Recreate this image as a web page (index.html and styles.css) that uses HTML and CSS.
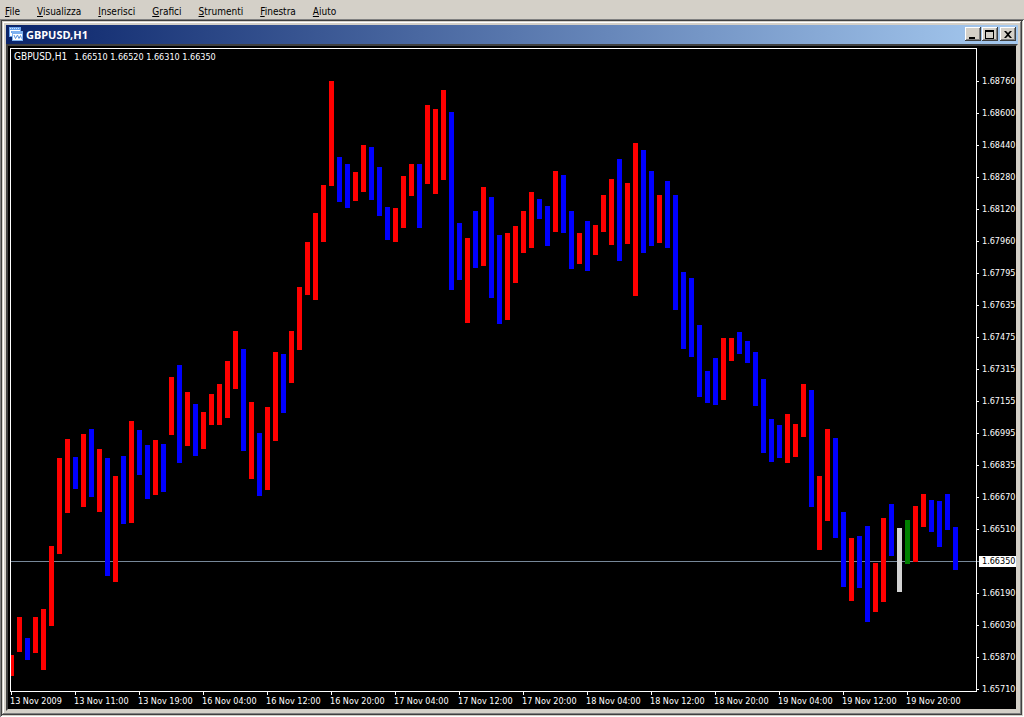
FILE: index.html
```html
<!DOCTYPE html>
<html lang="it">
<head>
  <meta charset="UTF-8">
  <title>GBPUSD,H1</title>
  <link rel="stylesheet" href="styles.css">
</head>
<body>

  <!-- Menu -->
  <nav class="menu">
    <a href="#"><u>F</u>ile</a>
    <a href="#"><u>V</u>isualizza</a>
    <a href="#"><u>I</u>nserisci</a>
    <a href="#"><u>G</u>rafici</a>
    <a href="#"><u>S</u>trumenti</a>
    <a href="#"><u>F</u>inestra</a>
    <a href="#"><u>A</u>iuto</a>
  </nav>

  <main class="workspace">
    <section class="window">
      <header class="titlebar">
        <svg class="title-icon" width="14" height="14" viewBox="0 0 14 14" shape-rendering="crispEdges">
          <rect x="0" y="0" width="12" height="10" fill="#6aa2ea"/>
          <path d="M1 1h1v1h-1zM3 1h1v1h-1zM5 1h1v1h-1zM7 1h1v1h-1zM9 1h1v1h-1z" fill="#cfe2ff"/>
          <rect x="1" y="3" width="10" height="6" fill="#fff"/>
          <path d="M2 4h1v2h1v1h1v-2h1v-1h1v1h-1v2h-1v1h-1v-1h-1v-1h-1z" fill="#6aa2ea"/>
          <rect x="3" y="4" width="11" height="10" fill="#7fb2f0"/>
          <rect x="4" y="7" width="9" height="6" fill="#fff"/>
          <path d="M5 8l1.500 3.500 2-3.500 1.500 3.500 1.500-3 1 3" fill="none" stroke="#5a92dc" shape-rendering="auto"/>
        </svg>
        <h1>GBPUSD,H1</h1>
        <div class="buttons">
          <button type="button" aria-label="Riduci a icona">
            <svg width="12" height="10" viewBox="0 0 12 10"><path d="M2 8h6v2h-6z"/></svg>
          </button>
          <button type="button" aria-label="Ingrandisci">
            <svg width="12" height="10" viewBox="0 0 12 10"><path d="M1 1h9v9h-9zM2 3v6h7v-6z" fill-rule="evenodd"/></svg>
          </button>
          <button type="button" class="close" aria-label="Chiudi">
            <svg width="12" height="10" viewBox="0 0 12 10"><path d="M2 2h2l2 2 2-2h2l-3 3.500 3 3.500h-2l-2-2-2 2h-2l3-3.500z"/></svg>
          </button>
        </div>
      </header>

      <div class="chart">
        <div class="plot-side">
          <div class="plot">
            <svg id="bars" viewBox="11 49 965 642" preserveAspectRatio="none" shape-rendering="crispEdges">
              <rect x="11" y="561" width="965" height="1" fill="#778899"/>
            </svg>
            <p class="quote"><span class="symbol">GBPUSD,H1</span> <span>1.66510 1.66520 1.66310 1.66350</span></p>
          </div>
          <div class="times">
            <span>13 Nov 2009</span>
            <span>13 Nov 11:00</span>
            <span>13 Nov 19:00</span>
            <span>16 Nov 04:00</span>
            <span>16 Nov 12:00</span>
            <span>16 Nov 20:00</span>
            <span>17 Nov 04:00</span>
            <span>17 Nov 12:00</span>
            <span>17 Nov 20:00</span>
            <span>18 Nov 04:00</span>
            <span>18 Nov 12:00</span>
            <span>18 Nov 20:00</span>
            <span>19 Nov 04:00</span>
            <span>19 Nov 12:00</span>
            <span>19 Nov 20:00</span>
          </div>
        </div>
        <div class="prices">
          <div><span>1.68760</span></div>
          <div><span>1.68600</span></div>
          <div><span>1.68440</span></div>
          <div><span>1.68280</span></div>
          <div><span>1.68120</span></div>
          <div><span>1.67960</span></div>
          <div><span>1.67795</span></div>
          <div><span>1.67635</span></div>
          <div><span>1.67475</span></div>
          <div><span>1.67315</span></div>
          <div><span>1.67155</span></div>
          <div><span>1.66995</span></div>
          <div><span>1.66835</span></div>
          <div><span>1.66670</span></div>
          <div><span>1.66510</span></div>
          <div class="current"><span>1.66350</span></div>
          <div><span>1.66190</span></div>
          <div><span>1.66030</span></div>
          <div><span>1.65870</span></div>
          <div><span>1.65710</span></div>
        </div>
      </div>
    </section>
  </main>

  <script src="chart.js"></script>
</body>
</html>
```
FILE: styles.css
```css
:root {
  --face: #d4d0c8;
  --shadow: #808080;
  --dark: #404040;
}
* { margin: 0; padding: 0; box-sizing: border-box; }
body {
  font-family: "DejaVu Sans Condensed", "DejaVu Sans", sans-serif;
  font-size: 10px;
  background: var(--face);
  height: 100vh;
  display: flex;
  flex-direction: column;
  overflow: hidden;
}

/* Menu */
.menu {
  display: flex;
  gap: 17px;
  height: 19px;
  padding: 3px 5px 0;
  line-height: 17px;
}
.menu a { color: #000; text-decoration: none; }

/* Window frame */
.workspace {
  flex: 1;
  min-height: 0;
  display: flex;
  padding: 2px;
  box-shadow: inset 1px 1px var(--shadow), inset -1px -1px #fff, inset 2px 2px var(--dark);
}
.window {
  flex: 1;
  min-width: 0;
  display: flex;
  flex-direction: column;
  padding: 4px;
  box-shadow: inset -1px -1px var(--dark), inset 1px 1px var(--face), inset -2px -2px var(--shadow), inset 2px 2px #fff;
}
.titlebar {
  display: flex;
  align-items: center;
  height: 19px;
  padding: 0 2px 0 3px;
  background: linear-gradient(to right, #0a246a, #a6caf0);
}
.titlebar h1 {
  flex: 1;
  margin-left: 3px;
  font-family: "Noto Sans", sans-serif;
  font-size: 11px;
  line-height: 18px;
  color: #fff;
}
.title-icon { margin-bottom: 1px; }
.buttons { display: flex; gap: 1px; margin-bottom: 1px; }
.buttons button {
  width: 16px;
  height: 14px;
  padding: 1px 2px;
  border: 0;
  background: var(--face);
  box-shadow: inset -1px -1px var(--dark), inset 1px 1px #fff, inset -2px -2px var(--shadow);
}
.buttons svg { display: block; }
.buttons .close { margin-left: 1px; }

/* Chart */
.chart {
  flex: 1;
  min-height: 0;
  display: flex;
  border: 2px solid;
  border-color: var(--dark) var(--face) var(--face) var(--dark);
  background: #000;
  color: #fff;
  font-size: 9px;
}
.plot-side {
  flex: 1;
  min-width: 0;
  display: flex;
  flex-direction: column;
  padding: 2px 0 0 2px;
}
.plot {
  position: relative;
  flex: 1;
  min-height: 0;
  border: 1px solid #fff;
}
.plot svg { display: block; width: 100%; height: 100%; }
.quote {
  position: absolute;
  top: 2px;
  left: 3px;
  display: flex;
  align-items: baseline;
  gap: 7px;
  line-height: 12px;
}
.quote .symbol { font-size: 10px; }
.times {
  display: grid;
  grid-template-columns: repeat(15, 1fr);
  height: 17px;
  padding-right: 7px;
}
.times span {
  line-height: 18px;
  white-space: nowrap;
}
.times span::before {
  content: "";
  display: block;
  width: 1px;
  height: 3px;
  margin: 0 0 -3px 1px;
  background: #fff;
}
.prices {
  width: 39px;
  padding: 19px 0 4px;
  display: flex;
  flex-direction: column;
}
.prices div {
  flex: 1;
  display: flex;
  align-items: center;
}
.prices div::before {
  content: "";
  width: 2px;
  height: 1px;
  background: #fff;
}
.prices span {
  flex: 1;
  padding-left: 3px;
  line-height: 11px;
}
.prices .current span { background: #fff; color: #000; }
.prices .current::before { background: #778899; }
```
FILE: chart.js
```javascript
// r = up, b = down, g / w = marked bars; then top and bottom of the bar
const bars = `
r655-676 r617-652 b638-660 r617-653 r609-670 r546-626 r458-554 r439-513 b457-489 r434-507
b429-497 r449-512 b458-576 r476-582 b456-524 r421-523 b430-475 b445-499 r440-495 b444-492
r377-435 b365-463 r392-446 b404-456 r412-449 r394-425 r384-425 r361-418 r331-389 b349-451
r402-479 b433-496 r407-490 r352-441 b354-413 r331-383 r287-350 r242-295 r213-300 r185-242
r81-186 b157-202 b164-208 r172-201 r145-192 b147-200 b167-216 b207-240 r208-242 r176-228
r164-196 b164-228 r105-184 r109-194 r90-180 b112-290 b223-280 r238-323 b211-268 r187-266
b197-298 b235-324 r233-320 r226-283 r211-253 r192-248 b199-219 b206-246 r171-232 b175-233
b211-269 r233-264 b221-271 r225-255 r195-232 r179-245 b159-261 r183-244 r143-296 b150-253
b171-246 r195-243 b181-248 b195-310 b272-349 b278-357 b325-397 b371-403 b358-405 r338-400
r338-361 b332-354 b341-363 b352-406 b379-453 b419-462 b425-458 r414-463 r424-457 r384-437
b390-507 r476-550 r429-521 b438-538 b512-587 r538-601 b536-588 b526-622 r563-612 r518-602
b504-556 w528-592 g520-564 r506-562 r494-527 b500-532 b501-547 b494-530 b527-570
`.trim().split(/\s+/);

const colors = { r: '#ff0000', b: '#0000ff', g: '#008000', w: '#d3d3d3' };
const svg = document.getElementById('bars');

bars.forEach((bar, i) => {
  const [top, bottom] = bar.slice(1).split('-').map(Number);
  const rect = document.createElementNS('http://www.w3.org/2000/svg', 'rect');
  rect.setAttribute('x', 9 + i * 8);
  rect.setAttribute('y', top);
  rect.setAttribute('width', 5);
  rect.setAttribute('height', bottom - top);
  rect.setAttribute('fill', colors[bar[0]]);
  svg.appendChild(rect);
});
```
